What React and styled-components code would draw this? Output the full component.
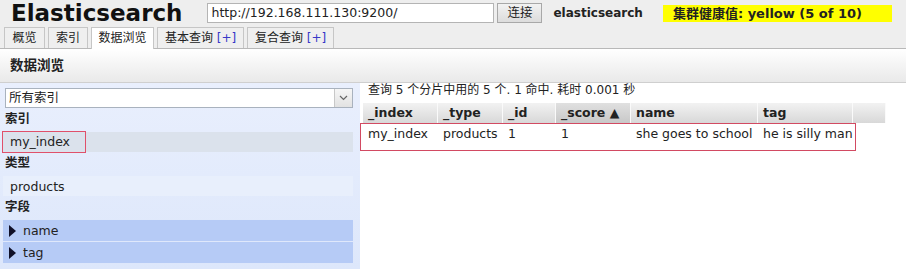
import styled, { createGlobalStyle } from 'styled-components'

const GlobalStyle = createGlobalStyle`
    body{
        margin:0;
        background:#fff;
        font-family:"DejaVu Sans","Noto Sans CJK SC",sans-serif;
        font-size:12.5px;
        color:#222;
    }
`

const Top = styled.header`
    background:#eeeeee;
`
const HeaderBar = styled.div`
    display:flex;
    align-items:center;
    height:26px;
    padding-left:11px;
`
const Title = styled.h1`
    margin:0 25px 0 0;
    font-size:23px;
    line-height:26px;
    font-weight:bold;
    color:#111;
`
const UrlInput = styled.div`
    box-sizing:border-box;
    width:287px;
    height:20px;
    border:1px solid #b4b4b4;
    background:#fff;
    padding-left:3px;
    line-height:18px;
    font-size:12.5px;
`
const ConnectButton = styled.div`
    box-sizing:border-box;
    width:45px;
    height:20px;
    margin-left:3px;
    border:1px solid #a8a8a8;
    background:linear-gradient(#f2f2f2,#dcdcdc);
    text-align:center;
    line-height:18px;
`
const ClusterName = styled.span`
    margin-left:11px;
    font-weight:bold;
    font-size:12px;
`
const Health = styled.span`
    margin-left:20px;
    box-sizing:border-box;
    width:229px;
    height:17px;
    line-height:17px;
    padding-left:10px;
    background:#ffff00;
    font-weight:bold;
    font-size:13px;
`
const Tabs = styled.nav`
    display:flex;
    gap:3px;
    height:21px;
    margin-top:1px;
    padding-left:4px;
    border-bottom:1px solid #b8b8b8;
`
const Tab = styled.div`
    box-sizing:border-box;
    width:${p => p.w}px;
    height:${p => p.active ? 22 : 21}px;
    border:1px solid #c6c6c6;
    border-bottom:none;
    background:${p => p.active ? '#fff' : '#efefef'};
    text-align:center;
    line-height:20px;
    font-size:12px;
    >b{color:#3838c8;font-weight:normal;}
`
const SectionHead = styled.div`
    height:33px;
    padding-left:10px;
    background:linear-gradient(#ffffff,#e9e9e9);
    border-bottom:1px solid #cfcfcf;
    line-height:33px;
    font-weight:bold;
    font-size:13.5px;
`
const Main = styled.main`
    display:flex;
    height:186px;
`
const Sidebar = styled.aside`
    width:360px;
    box-sizing:border-box;
    padding:5px 7px 0 3px;
    background:linear-gradient(#e9effd,#dde7fb);
`
const Select = styled.div`
    display:flex;
    box-sizing:border-box;
    height:20px;
    margin-left:2px;
    border:1px solid #a9b2be;
    background:#fff;
    >span{flex:1;padding-left:3px;line-height:18px;}
    >i{
        width:17px;
        border-left:1px solid #c8c8c8;
        background:linear-gradient(#f6f6f6,#e2e2e2);
        display:flex;align-items:center;justify-content:center;
    }
`
const Label = styled.div`
    margin:1px 0 0 2px;
    line-height:20px;
    font-weight:bold;
    font-size:12.5px;
`
const Row = styled.div`
    display:flex;
    align-items:center;
    height:${p => p.h || 20}px;
    margin:${p => p.mt ?? 3}px 0 ${p => p.mb || 0}px;
    padding-left:${p => p.pl ?? 7}px;
    background:${p => p.bg};
`
const Mark = styled.span`
    display:block;
    width:75px;
    height:20px;
    line-height:20px;
    padding-left:7px;
    margin-left:-7px;
    outline:1px solid #e0506a;
`
const Arrow = styled.i`
    width:0;height:0;
    margin-right:7px;
    border-left:7px solid #101028;
    border-top:6px solid transparent;
    border-bottom:6px solid transparent;
`
const Results = styled.section`
    flex:1;
    padding-left:3px;
`
const Info = styled.div`
    margin-left:5px;
    line-height:14px;
    font-size:12px;
`
const cols = '75px 65px 53px 75px 127px 95px 33px'
const HeadRow = styled.div`
    display:grid;
    grid-template-columns:${cols};
    height:20px;
    margin-top:6px;
`
const HeadCell = styled.div`
    box-sizing:border-box;
    padding-left:5px;
    line-height:20px;
    font-weight:bold;
    white-space:nowrap;
    border-right:1px solid #fafafa;
    background:${p => p.sorted ? 'linear-gradient(#e0e0e0,#c8c8c8)' : 'linear-gradient(#f2f2f2,#d8d8d8)'};
`
const DataBox = styled.div`
    box-sizing:border-box;
    width:496px;
    height:28px;
    margin-left:-3px;
    padding-left:2px;
    border:1px solid #d24a62;
`
const DataRow = styled.div`
    display:grid;
    grid-template-columns:${cols};
    line-height:20px;
    >span{padding-left:5px;white-space:nowrap;}
`

const headers = ['_index', '_type', '_id', '_score ▲', 'name', 'tag', '']
const values = ['my_index', 'products', '1', '1', 'she goes to school', 'he is silly man']

export default function App() {
    return <>
        <GlobalStyle />
        <Top>
            <HeaderBar>
                <Title>Elasticsearch</Title>
                <UrlInput>http://192.168.111.130:9200/</UrlInput>
                <ConnectButton>连接</ConnectButton>
                <ClusterName>elasticsearch</ClusterName>
                <Health>集群健康值: yellow (5 of 10)</Health>
            </HeaderBar>
            <Tabs>
                <Tab w={41}>概览</Tab>
                <Tab w={40}>索引</Tab>
                <Tab w={63} active>数据浏览</Tab>
                <Tab w={87}>基本查询 <b>[+]</b></Tab>
                <Tab w={87}>复合查询 <b>[+]</b></Tab>
            </Tabs>
        </Top>
        <SectionHead>数据浏览</SectionHead>
        <Main>
            <Sidebar>
                <Select>
                    <span>所有索引</span>
                    <i>
                        <svg width="9" height="6" viewBox="0 0 9 6"><path d="M1 1l3.5 3.5L8 1" fill="none" stroke="#666" strokeWidth="1.2"/></svg>
                    </i>
                </Select>
                <Label>索引</Label>
                <Row bg="#dbe2ec"><Mark>my_index</Mark></Row>
                <Label>类型</Label>
                <Row bg="#e8effc">products</Row>
                <Label>字段</Label>
                <Row bg="#b6cbf6" h={21} mb={1} pl={6}><Arrow />name</Row>
                <Row bg="#b6cbf6" h={21} mt={0} pl={6}><Arrow />tag</Row>
            </Sidebar>
            <Results>
                <Info>查询 5 个分片中用的 5 个. 1 命中. 耗时 0.001 秒</Info>
                <HeadRow>
                    {headers.map((h, i) => <HeadCell key={i} sorted={i === 3}>{h}</HeadCell>)}
                </HeadRow>
                <DataBox>
                    <DataRow>
                        {values.map((v, i) => <span key={i}>{v}</span>)}
                    </DataRow>
                </DataBox>
            </Results>
        </Main>
    </>
}
